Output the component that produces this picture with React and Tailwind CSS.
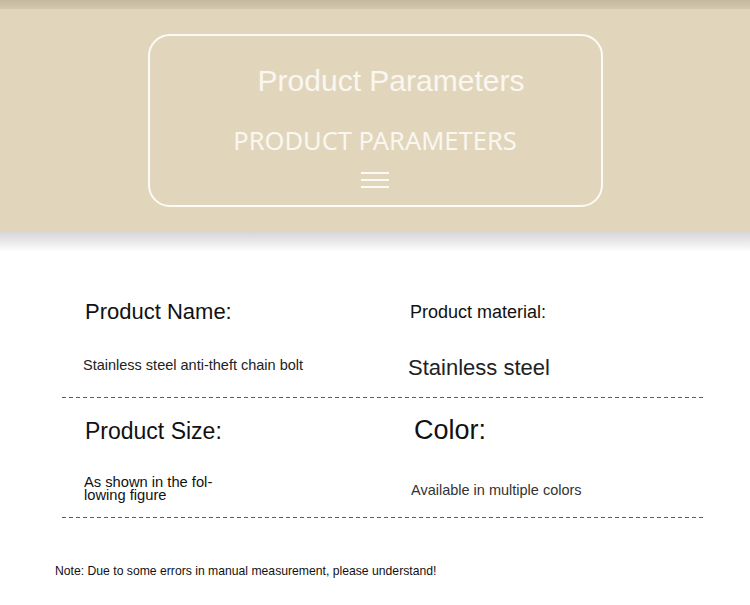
import React from 'react';

const dash = 'h-px w-full bg-[repeating-linear-gradient(to_right,#5f5f5f_0px,#5f5f5f_4px,transparent_4px,transparent_7px)]';

const App = () => {
  return (
    <div className="w-[750px] h-[605px] bg-white font-['Liberation_Sans',Arial,sans-serif] overflow-hidden">
      {/* Header band */}
      <div className="h-[9px] bg-gradient-to-b from-[#c4b8a0] to-[#d3c7ae]" />
      <div className="h-[223px] bg-[#e1d6bc] flex justify-center pt-[25px]">
        <div className="w-[455px] h-[173px] border-2 border-[#fdfbf6] rounded-[22px] flex flex-col items-center">
          <h1 className="mt-[28px] ml-[32px] text-[30px] leading-[34px] text-[#faf7f1]">Product Parameters</h1>
          <p className="mt-[27px] text-[25.5px] leading-[30px] text-[#faf7f1] font-['Noto_Sans',sans-serif]">PRODUCT PARAMETERS</p>
          <div className="mt-[17px] flex flex-col gap-[5px]">
            <span className="block w-[28px] h-[2px] bg-[#fdfbf6]" />
            <span className="block w-[28px] h-[2px] bg-[#fdfbf6]" />
            <span className="block w-[28px] h-[2px] bg-[#fdfbf6]" />
          </div>
        </div>
      </div>
      <div className="h-[20px] bg-gradient-to-b from-[#d6d6da] to-white" />

      {/* Parameters */}
      <div className="mx-[62px] w-[644px] pt-[47px]">
        <div className="grid grid-cols-2 h-[98px]">
          <div className="pl-[23px] flex flex-col">
            <span className="text-[22px] leading-[26px] text-[#111]">Product Name:</span>
            <span className="mt-[31px] ml-[-2px] text-[14.5px] leading-[18px] text-[#222]">Stainless steel anti-theft chain bolt</span>
          </div>
          <div className="pl-[26px] flex flex-col">
            <span className="mt-[2px] text-[18px] leading-[22px] text-[#111]">Product material:</span>
            <span className="mt-[33px] ml-[-2px] text-[22px] leading-[24px] text-[#222]">Stainless steel</span>
          </div>
        </div>
        <div className={dash} />
        <div className="grid grid-cols-2 h-[119px]">
          <div className="pl-[23px] flex flex-col">
            <span className="mt-[20px] text-[23px] leading-[27px] text-[#111]">Product Size:</span>
            <span className="mt-[31px] ml-[-1px] w-[140px] origin-left scale-x-[1.05] text-[14px] leading-[13px] text-[#111]">As shown in the fol-<br />lowing figure</span>
          </div>
          <div className="pl-[30px] flex flex-col">
            <span className="mt-[17px] text-[27px] leading-[31px] text-[#111]">Color:</span>
            <span className="mt-[35px] ml-[-3px] text-[14.5px] leading-[18px] text-[#333]">Available in multiple colors</span>
          </div>
        </div>
        <div className={dash} />
      </div>

      <p className="mt-[45px] ml-[55px] text-[12.2px] leading-[16px] text-[#111]">Note: Due to some errors in manual measurement, please understand!</p>
    </div>
  );
};

export default App;
